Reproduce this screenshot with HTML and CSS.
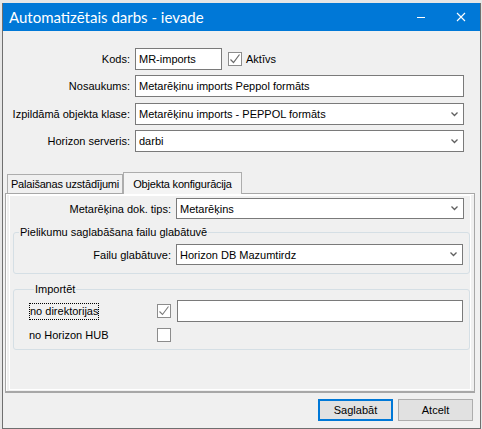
FILE: index.html
```html
<!DOCTYPE html>
<html lang="lv">
<head>
    <meta charset="UTF-8">
    <meta name="viewport" content="width=device-width, initial-scale=1.0">
    <title>Automatizētais darbs - ievade</title>
    <link rel="stylesheet" href="styles.css">
</head>
<body>
    <div class="window">
        <div class="title-bar">
            <span class="title">Automatizētais darbs - ievade</span>
            <div class="caption-btns">
                <span class="caption-btn">
                    <svg width="10" height="10" viewBox="0 0 10 10"><path d="M1 5.5H9" stroke="#fff" stroke-width="1"/></svg>
                </span>
                <span class="caption-btn close">
                    <svg width="10" height="10" viewBox="0 0 10 10"><path d="M1 1L9 9M9 1L1 9" stroke="#fff" stroke-width="1.1"/></svg>
                </span>
            </div>
        </div>

        <div class="content">
            <!-- Main fields -->
            <div class="main-form">
                <span class="lbl">Kods:</span>
                <div class="inline">
                    <div class="field code">MR-imports</div>
                    <span class="check">
                        <svg width="12" height="12" viewBox="0 0 12 12"><path d="M1.5 6.5L4.5 9.5L10.5 1.5" fill="none" stroke="#6b6b6b" stroke-width="1.2"/></svg>
                    </span>
                    <span class="check-text">Aktīvs</span>
                </div>

                <span class="lbl">Nosaukums:</span>
                <div class="field">Metarēķinu imports Peppol formāts</div>

                <span class="lbl lower">Izpildāmā objekta klase:</span>
                <div class="field select lower">
                    <span>Metarēķinu imports - PEPPOL formāts</span>
                    <svg width="7" height="5" viewBox="0 0 7 5"><path d="M0.5 0.5L3.5 3.5L6.5 0.5" fill="none" stroke="#606060" stroke-width="1.3"/></svg>
                </div>

                <span class="lbl">Horizon serveris:</span>
                <div class="field select">
                    <span>darbi</span>
                    <svg width="7" height="5" viewBox="0 0 7 5"><path d="M0.5 0.5L3.5 3.5L6.5 0.5" fill="none" stroke="#606060" stroke-width="1.3"/></svg>
                </div>
            </div>

            <!-- Tabs -->
            <div class="tabs">
                <div class="tab">Palaišanas uzstādījumi</div>
                <div class="tab active">Objekta konfigurācija</div>
            </div>
            <div class="tab-panel">
                <div class="tab-page">
                    <div class="page-row">
                        <span class="lbl">Metarēķina dok. tips:</span>
                        <div class="field select">
                            <span>Metarēķins</span>
                            <svg width="7" height="5" viewBox="0 0 7 5"><path d="M0.5 0.5L3.5 3.5L6.5 0.5" fill="none" stroke="#606060" stroke-width="1.3"/></svg>
                        </div>
                    </div>

                    <fieldset class="group">
                        <legend>Pielikumu saglabāšana failu glabātuvē</legend>
                        <div class="page-row">
                            <span class="lbl">Failu glabātuve:</span>
                            <div class="field select">
                                <span>Horizon DB Mazumtirdz</span>
                                <svg width="7" height="5" viewBox="0 0 7 5"><path d="M0.5 0.5L3.5 3.5L6.5 0.5" fill="none" stroke="#606060" stroke-width="1.3"/></svg>
                            </div>
                        </div>
                    </fieldset>

                    <fieldset class="group import">
                        <legend>Importēt</legend>
                        <div class="import-row">
                            <span class="opt"><span class="focus">no direktorijas</span></span>
                            <span class="check">
                                <svg width="12" height="12" viewBox="0 0 12 12"><path d="M1.5 6.5L4.5 9.5L10.5 1.5" fill="none" stroke="#7a7a7a" stroke-width="1.1"/></svg>
                            </span>
                            <div class="field"></div>
                        </div>
                        <div class="import-row">
                            <span class="opt">no Horizon HUB</span>
                            <span class="check"></span>
                        </div>
                    </fieldset>
                </div>
            </div>

            <!-- Dialog buttons -->
            <div class="buttons">
                <button class="btn default">Saglabāt</button>
                <button class="btn">Atcelt</button>
            </div>
        </div>
    </div>
</body>
</html>
```

FILE: styles.css
```css
body {
    margin: 0;
    background-color: #e6e6e6;
    font-family: "Liberation Sans", Arial, sans-serif;
    font-size: 11px;
    color: #000;
}
.window {
    margin: 3px 0 0 2px;
    width: 479px;
    height: 426px;
    box-sizing: border-box;
    border: 1px solid #6f6f6f;
    border-top: none;
    background-color: #f0f0f0;
}
.title-bar {
    height: 28px;
    background-color: #0078d7;
    color: white;
    display: flex;
    align-items: center;
    justify-content: space-between;
    padding-left: 6px;
}
.title {
    font-family: Lato, "Liberation Sans", sans-serif;
    font-size: 15px;
}
.caption-btns {
    display: flex;
    height: 100%;
}
.caption-btn {
    width: 42px;
    display: flex;
    align-items: center;
    justify-content: center;
}
.caption-btn.close {
    width: 38px;
}
.main-form {
    display: grid;
    grid-template-columns: 127px 1fr;
    grid-template-rows: 22px 22px 23px 22px;
    column-gap: 5px;
    row-gap: 5px;
    padding: 17px 16px 0 0;
}
.lbl {
    text-align: right;
    align-self: center;
    white-space: nowrap;
}
/* third row sits one pixel lower, like the original dialog */
.main-form .lower {
    margin-top: 1px;
}
.inline {
    display: flex;
    align-items: center;
}
.field {
    height: 22px;
    box-sizing: border-box;
    border: 1px solid #7a7a7a;
    background-color: white;
    padding: 0 3px;
    display: flex;
    align-items: center;
    white-space: nowrap;
    overflow: hidden;
}
.field.code {
    width: 87px;
}
.field.select {
    justify-content: space-between;
    padding-right: 5px;
}
.check {
    width: 14px;
    height: 14px;
    box-sizing: border-box;
    border: 1px solid #8c8c8c;
    background-color: white;
    display: inline-flex;
    align-items: center;
    justify-content: center;
    flex-shrink: 0;
}
.inline .check {
    margin-left: 6px;
}
.check-text {
    margin-left: 4px;
}
.tabs {
    display: flex;
    align-items: flex-end;
    height: 21px;
    margin: 20px 0 0 4px;
    position: relative;
    z-index: 1;
}
.tab {
    width: 116px;
    height: 19px;
    box-sizing: border-box;
    border: 1px solid #adadad;
    border-bottom: none;
    display: flex;
    align-items: center;
    justify-content: center;
    background-color: #f0f0f0;
    white-space: nowrap;
    letter-spacing: -0.2px;
}
.tab.active {
    width: 119px;
    height: 22px;
    margin-bottom: -1px;
    background-color: #f4f4f4;
}
.tab-panel {
    margin-left: 2px;
    width: 470px;
    height: 200px;
    box-sizing: border-box;
    border: 1px solid #a7a7a7;
    border-bottom-width: 2px;
    padding: 1px 3px 1px 3px;
    box-shadow: inset 1px 1px 0 white;
}
.tab-page {
    height: 100%;
    box-sizing: border-box;
    border: 1px solid white;
    padding-top: 2px;
}
.page-row {
    display: flex;
    align-items: center;
    height: 21px;
    margin-right: 6px;
}
.page-row .lbl {
    width: 161px;
    margin-right: 5px;
}
.page-row .field {
    flex: 1;
    height: 21px;
}
.group {
    margin: 7px 0 0 3px;
    border: 1px solid #d5dfe5;
    border-radius: 3px;
    padding: 5px 6px 8px 0;
    min-width: 0;
}
.group legend {
    margin-left: 5px;
    padding: 0 1px;
    line-height: 13px;
}
.group .page-row {
    margin-right: 0;
}
.group .page-row .lbl {
    width: 157px;
}
.group.import {
    margin-top: 9px;
    padding: 4px 6px 3px 15px;
}
.import-row {
    display: flex;
    align-items: center;
    height: 22px;
}
.import-row + .import-row {
    margin-top: 2px;
}
.opt {
    width: 128px;
    flex-shrink: 0;
}
.focus {
    display: inline-block;
    border: 1px dotted #000;
    line-height: 15px;
}
.import-row .check {
    margin-right: 6px;
}
.import-row .field {
    flex: 1;
}
.buttons {
    display: flex;
    justify-content: flex-end;
    gap: 5px;
    margin: 6px 7px 0 0;
}
.btn {
    width: 75px;
    height: 22px;
    padding: 0;
    font: inherit;
    color: #000;
    background-color: #e1e1e1;
    border: 1px solid #adadad;
}
.btn.default {
    border-color: #0078d7;
    box-shadow: inset 0 0 0 1px #0078d7;
}
```
